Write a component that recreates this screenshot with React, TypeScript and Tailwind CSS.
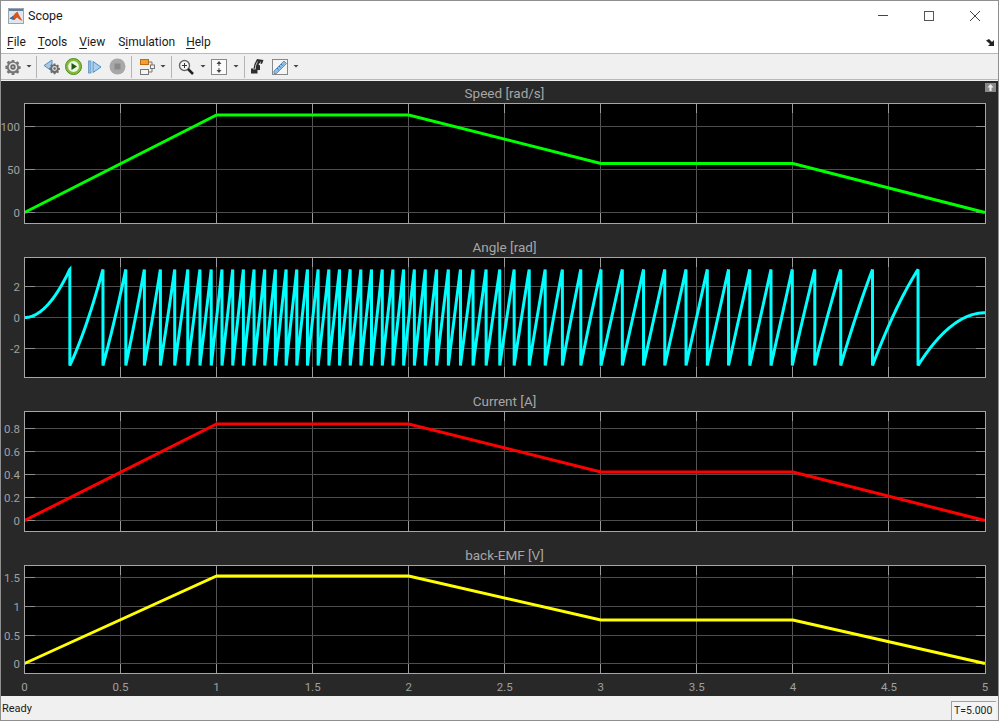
import React from "react";

const AX0 = 24.5;
const AX1 = 985.5;
const W = 999;
const px = (t: number) => AX0 + (t / 5) * (AX1 - AX0 - 0.5);

function speed(t: number) {
  const a = 113, b = 56.8;
  if (t < 1) return a * t;
  if (t < 2) return a;
  if (t < 3) return a + (b - a) * (t - 2);
  if (t < 4) return b;
  return b * (5 - t);
}

function anglePath(y: (v: number) => number) {
  const dt = 0.0005;
  let th = 0;
  let d = `M${px(0).toFixed(2)} ${y(0).toFixed(2)}`;
  for (let t = dt; t <= 5; t += dt) {
    th += speed(t) * dt;
    if (th > Math.PI) {
      d += `L${px(t).toFixed(2)} ${y(Math.PI).toFixed(2)}L${px(t).toFixed(2)} ${y(-Math.PI).toFixed(2)}`;
      th -= 2 * Math.PI;
    } else if (Math.round(t / dt) % 10 === 0) {
      d += `L${px(t).toFixed(2)} ${y(th).toFixed(2)}`;
    }
  }
  return d;
}

const XT = ["0", "0.5", "1", "1.5", "2", "2.5", "3", "3.5", "4", "4.5", "5"];

type Tick = { label: string; y: number };

function Plot({
  title,
  ticks,
  path,
  color,
  axisH,
  xLabels,
}: {
  title: string;
  ticks: Tick[];
  path: string;
  color: string;
  axisH: number;
  xLabels?: boolean;
}) {
  const svgH = xLabels ? 131 : 121;
  return (
    <div className={xLabels ? "flex flex-col" : "flex flex-col mb-[11px]"}>
      <div className="h-[22px] pl-[22px] pr-[12px] pt-[4px] flex items-center justify-center text-[13.5px] leading-none text-[#a6a6a6]">
        {title}
      </div>
      <svg width={W} height={svgH} className="block -ml-[1px] max-w-none">
        <rect x={AX0} y={0.5} width={AX1 - AX0} height={axisH} fill="#000" />
        {XT.slice(1, -1).map((_, i) => (
          <line key={i} x1={px((i + 1) * 0.5)} x2={px((i + 1) * 0.5)} y1={0} y2={axisH} stroke="#555" strokeWidth={1} shapeRendering="crispEdges" />
        ))}
        {XT.slice(1, -1).map((_, i) => (
          <g key={i} stroke="#9a9a9a" shapeRendering="crispEdges">
            <line x1={px((i + 1) * 0.5)} x2={px((i + 1) * 0.5)} y1={0} y2={10} />
            <line x1={px((i + 1) * 0.5)} x2={px((i + 1) * 0.5)} y1={axisH - 10} y2={axisH} />
          </g>
        ))}
        {ticks.map((t) => (
          <g key={t.label} shapeRendering="crispEdges">
            <line x1={AX0} x2={AX1} y1={t.y} y2={t.y} stroke="#4d4d4d" />
            <line x1={AX0} x2={AX0 + 10} y1={t.y} y2={t.y} stroke="#8c8c8c" />
            <line x1={AX1 - 10} x2={AX1} y1={t.y} y2={t.y} stroke="#8c8c8c" />
            <text x={20} y={t.y + 4} textAnchor="end" fontSize={11.5} fill="#a0a0a0" stroke="none">
              {t.label}
            </text>
          </g>
        ))}
        <path d={path} fill="none" stroke={color} strokeWidth={3} strokeLinejoin="miter" strokeMiterlimit={3} />
        <rect x={AX0} y={0.5} width={AX1 - AX0} height={axisH} fill="none" stroke="#a6a6a6" shapeRendering="crispEdges" />
        {xLabels &&
          XT.map((l, i) => (
            <text key={l} x={px(i * 0.5)} y={axisH + 18} textAnchor="middle" fontSize={11.5} fill="#a0a0a0">
              {l}
            </text>
          ))}
      </svg>
    </div>
  );
}

function trap(y0: number, yTop: number, yMid: number) {
  const pts = [
    [0, y0],
    [1, yTop],
    [2, yTop],
    [3, yMid],
    [4, yMid],
    [5, y0],
  ];
  return "M" + pts.map(([t, y]) => `${px(t).toFixed(2)} ${y}`).join("L");
}

function Caret() {
  return (
    <svg width="10" height="25" viewBox="0 0 10 25" className="shrink-0">
      <path d="M2.500 11h5L5 13.500z" fill="#444" />
    </svg>
  );
}

function Sep({ cls }: { cls: string }) {
  return <div className={`w-[1px] h-[22px] bg-[#b4b4b4] shrink-0 ${cls}`} />;
}

const GEAR =
  "M7.600 1h2.800l.4 2.100 1.500.6 1.800-1.200 2 2-1.200 1.800.6 1.500 2.100.4v2.800l-2.100.4-.6 1.500 1.200 1.800-2 2-1.800-1.200-1.500.6-.4 2.100H7.600l-.4-2.100-1.500-.6-1.800 1.200-2-2 1.200-1.800-.6-1.500-2.100-.4V7.600l2.100-.4.6-1.500-1.200-1.800 2-2 1.800 1.200 1.500-.6z";

function Gear() {
  return (
    <svg width="16" height="16" viewBox="0 0 18 18">
      <path d={GEAR} fill="#777" />
      <circle cx="9" cy="9" r="4.800" fill="#e6e6e6" />
      <circle cx="9" cy="9" r="3" fill="#666" />
      <circle cx="9" cy="9" r="1.500" fill="#aaa" />
    </svg>
  );
}

const Box = ({ children, cls }: { children: React.ReactNode; cls: string }) => (
  <div className={`h-[25px] flex items-center justify-center shrink-0 ${cls}`}>{children}</div>
);

function Mnemonic({ before = "", u, after, cls }: { before?: string; u: string; after: string; cls: string }) {
  return (
    <span className={cls}>
      {before}
      <span className="underline underline-offset-2">{u}</span>
      {after}
    </span>
  );
}

export default function App() {
  const path2 = anglePath((v) => 60.5 - v * 15.3);
  return (
    <div className="w-[999px] h-[721px] flex flex-col overflow-hidden bg-white border border-[#8f8f8f] font-['Roboto',sans-serif] text-[#1a1a1a]">
      <div className="h-[30px] shrink-0 flex items-center pl-[7px]">
        <svg width="16" height="16" viewBox="0 0 16 16" className="shrink-0">
          <rect x="0.500" y="0.500" width="15" height="15" fill="#dfe7ee" stroke="#9aa5ae" />
          <rect x="1" y="1" width="14" height="2" fill="#5f7f9e" />
          <path d="M1.500 10.500 5 8l2-2.500L9.500 3.500 11 7l3.500 6-3-1.500L9 9.500 6.500 12z" fill="#d9541e" />
          <path d="M1.500 10.500 5 8l1.500 4z" fill="#2f6fb0" />
        </svg>
        <span className="ml-[4px] text-[12.5px]">Scope</span>
        <div className="ml-auto flex items-center">
          <div className="w-[46px] h-[30px] flex items-center justify-center">
            <svg width="10" height="10" viewBox="0 0 10 10"><path d="M0 4.500h10" stroke="#444" /></svg>
          </div>
          <div className="w-[46px] h-[30px] flex items-center justify-center">
            <svg width="10" height="10" viewBox="0 0 10 10"><rect x="0.500" y="0.500" width="9" height="9" fill="none" stroke="#555" /></svg>
          </div>
          <div className="w-[46px] h-[30px] flex items-center justify-center">
            <svg width="10" height="10" viewBox="0 0 10 10"><path d="m0 0 10 10M10 0 0 10" stroke="#444" /></svg>
          </div>
        </div>
      </div>
      <div className="h-[22px] shrink-0 relative flex items-center text-[12px] pl-[6px]">
        <Mnemonic u="F" after="ile" cls="" />
        <Mnemonic u="T" after="ools" cls="ml-[12px]" />
        <Mnemonic u="V" after="iew" cls="ml-[12px]" />
        <Mnemonic before="S" u="i" after="mulation" cls="ml-[13px]" />
        <Mnemonic u="H" after="elp" cls="ml-[11px]" />
        <svg width="10" height="8" viewBox="0 0 10 8" className="absolute right-[2px] top-[8px]">
          <path d="M0 1.500 3 0l3 3 2-2v6H2l2-2z" fill="#222" />
        </svg>
      </div>
      <div className="h-[25px] shrink-0 flex items-center bg-[#f0f0f0] border-t border-[#b9b9b9] box-content pl-[1px]">
        <Box cls="w-[22px]"><Gear /></Box>
        <Caret />
        <Sep cls="ml-[2px]" />
        <Box cls="w-[22px] ml-[4px]">
          <svg width="18" height="16" viewBox="0 0 18 16">
            <path d="M1 6.500 9 1v11z" fill="#a9c8e4" stroke="#5b8fc0" />
            <g transform="translate(6 4) scale(.62)"><path d={GEAR} fill="#6b6b6b" /><circle cx="9" cy="9" r="4" fill="#ddd" /><circle cx="9" cy="9" r="2" fill="#666" /></g>
          </svg>
        </Box>
        <Box cls="w-[21px]">
          <svg width="17" height="17" viewBox="0 0 17 17">
            <circle cx="8.500" cy="8.500" r="8" fill="#84bd3d" stroke="#4c8a1c" />
            <circle cx="8.500" cy="8.500" r="5.400" fill="#eef6df" />
            <path d="M6.500 5 12 8.500 6.500 12z" fill="#1d5b12" />
          </svg>
        </Box>
        <Box cls="w-[22px]">
          <svg width="14" height="14" viewBox="0 0 14 14">
            <rect x="0.500" y="1" width="2.500" height="12" fill="#8fbce0" stroke="#5b92c4" strokeWidth="0.800" />
            <path d="M5 1.500 13 7 5 12.500z" fill="#a9d0ee" stroke="#4f8ec8" />
          </svg>
        </Box>
        <Box cls="w-[22px]">
          <svg width="17" height="17" viewBox="0 0 17 17">
            <circle cx="8.500" cy="8.500" r="8" fill="#a8a8a8" />
            <rect x="5.500" y="5.500" width="6" height="6" fill="#8a8a8a" />
          </svg>
        </Box>
        <Sep cls="ml-[3px]" />
        <Box cls="w-[22px] ml-[4px]">
          <svg width="16" height="16" viewBox="0 0 16 16">
            <rect x="1.500" y="0.500" width="8" height="5" fill="#f0a030" stroke="#c06a10" />
            <rect x="1.500" y="10.500" width="8" height="5" fill="#f4f4f4" stroke="#777" />
            <rect x="11.500" y="6" width="4" height="3.500" fill="#f4f4f4" stroke="#777" />
            <path d="M9.500 3h3.500v3M9.500 13h3.500V9.500" fill="none" stroke="#777" />
          </svg>
        </Box>
        <Caret />
        <Sep cls="ml-[3px]" />
        <Box cls="w-[22px] ml-[3px]">
          <svg width="16" height="16" viewBox="0 0 16 16">
            <circle cx="6.500" cy="6.500" r="5" fill="#f5f5f5" stroke="#666" strokeWidth="1.400" />
            <path d="M6.500 4v5M4 6.500h5" stroke="#333" />
            <path d="m10 10 5 5" stroke="#222" strokeWidth="2.500" />
          </svg>
        </Box>
        <div className="w-[1px] shrink-0" />
        <Caret />
        <Box cls="w-[22px]">
          <svg width="16" height="16" viewBox="0 0 16 16">
            <rect x="0.500" y="0.500" width="15" height="15" fill="#fbfbfb" stroke="#888" />
            <path d="M8 2 5.500 5h5zM8 14l-2.500-3h5z" fill="#444" />
            <path d="M8 5v2M8 9v2" stroke="#444" />
          </svg>
        </Box>
        <div className="w-[1px] shrink-0" />
        <Caret />
        <Sep cls="ml-[3px]" />
        <Box cls="w-[22px] ml-[1px]">
          <svg width="14" height="15" viewBox="0 0 14 15">
            <path d="M7 0 13.500 1 12 5 9.500 4 8.500 5.500 10 6.500V11H7.500v3.500H1V9.500h2.500l1-4.500z" fill="#2e2e2e" />
            <path d="M7.500 2.500 5.500 7v3H3M10 3l1 .5" fill="none" stroke="#d8d8d8" strokeWidth="0.800" />
          </svg>
        </Box>
        <Box cls="w-[22px] ml-[1px]">
          <svg width="16" height="16" viewBox="0 0 16 16">
            <rect x="0.500" y="0.500" width="15" height="15" fill="#f5f5f5" stroke="#888" />
            <path d="M2 12 12 2l2.500 2.500-10 10H2z" fill="#8fbfe6" stroke="#5f93bd" />
            <path d="m5 9 1.500 1.500M7 7l1.500 1.500M9 5l1.500 1.500" stroke="#3e6f98" />
          </svg>
        </Box>
        <Caret />
      </div>
      <div className="h-[1px] shrink-0 bg-[#b9b9b9]" />
      <div className="flex-1 min-h-0 relative overflow-hidden bg-[#282828] border-t border-[#f0f0f0]">
        <Plot
          title="Speed [rad/s]"
          ticks={[
            { label: "100", y: 23.5 },
            { label: "50", y: 66.5 },
            { label: "0", y: 109.5 },
          ]}
          path={trap(109.5, 12, 60.5)}
          color="#00ff00"
          axisH={120}
        />
        <Plot
          title="Angle [rad]"
          ticks={[
            { label: "2", y: 29.5 },
            { label: "0", y: 60.5 },
            { label: "-2", y: 91.5 },
          ]}
          path={path2}
          color="#00ffff"
          axisH={120}
        />
        <Plot
          title="Current [A]"
          ticks={[
            { label: "0.8", y: 17.5 },
            { label: "0.6", y: 40.5 },
            { label: "0.4", y: 63.5 },
            { label: "0.2", y: 86.5 },
            { label: "0", y: 109.5 },
          ]}
          path={trap(109.5, 13, 61)}
          color="#ff0000"
          axisH={120}
        />
        <Plot
          title="back-EMF [V]"
          ticks={[
            { label: "1.5", y: 12.5 },
            { label: "1", y: 41.5 },
            { label: "0.5", y: 70.5 },
            { label: "0", y: 98.5 },
          ]}
          path={trap(98.5, 11, 55)}
          color="#ffff00"
          axisH={108}
          xLabels
        />
        <div className="absolute right-[2px] top-[2px] w-[11px] h-[9px] bg-[#8a8a8a] flex items-center justify-center">
          <svg width="9" height="7" viewBox="0 0 9 7">
            <path d="M4.500 0 7.500 3.500H5.500V7h-2V3.500h-2z" fill="#eee" />
          </svg>
        </div>
      </div>
      <div className="h-[24px] shrink-0 bg-[#f0f0f0] flex items-center justify-between text-[11px] pl-[1px] pr-[2px] pt-[3px]">
        <span>Ready</span>
        <span className="w-[45px] h-[19px] self-end flex items-center pl-[2px] border-t border-l border-[#a0a0a0] bg-[#f4f4f4] text-[10.5px] text-[#222]">
          T=5.000
        </span>
      </div>
    </div>
  );
}
